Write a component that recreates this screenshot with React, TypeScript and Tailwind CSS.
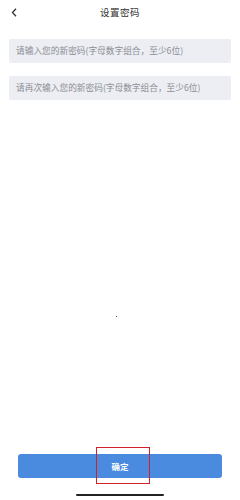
import React from "react";

export default function App() {
  const font = { fontFamily: '"Noto Sans CJK SC", "Noto Sans", sans-serif' };
  return (
    <div className="relative w-[240px] h-[500px] bg-white overflow-hidden flex flex-col" style={font}>
      <div className="relative h-[26px] flex items-center justify-center">
        <svg className="absolute left-[11px] top-[8px]" width="7" height="9" viewBox="0 0 7 9">
          <path d="M5 0.8 L1.5 4.5 L5 8.2" fill="none" stroke="#333" strokeWidth="1.3" />
        </svg>
        <span className="text-[9.5px] leading-none text-[#333] tracking-[0.5px]">设置密码</span>
      </div>
      <div className="px-[9px] pt-[13px] flex flex-col gap-[13px]">
        <div className="h-[24px] rounded-[2px] bg-[#eceef3] flex items-center pl-[7px] text-[8.7px] text-[#8a8d93] leading-none">
          请输入您的新密码(字母数字组合，至少6位)
        </div>
        <div className="h-[24px] rounded-[2px] bg-[#eceef3] flex items-center pl-[7px] text-[8.7px] text-[#8a8d93] leading-none">
          请再次输入您的新密码(字母数字组合，至少6位)
        </div>
      </div>
      <div className="flex-1 relative">
        <div className="absolute left-[116px] top-[216px] w-[1px] h-[1px] bg-[#555]" />
      </div>
      <div className="px-[18px] pb-[22px]">
        <div className="h-[24px] rounded-[3px] bg-[#4a8be0] flex items-center justify-center text-white text-[8.5px] font-bold leading-none">
          确定
        </div>
      </div>
      <div className="absolute left-[96px] top-[447px] w-[54px] h-[37px] border border-[#d0202a]" />
      <div className="absolute left-[76px] top-[494px] w-[88px] h-[2px] rounded-full bg-[#222]" />
    </div>
  );
}
